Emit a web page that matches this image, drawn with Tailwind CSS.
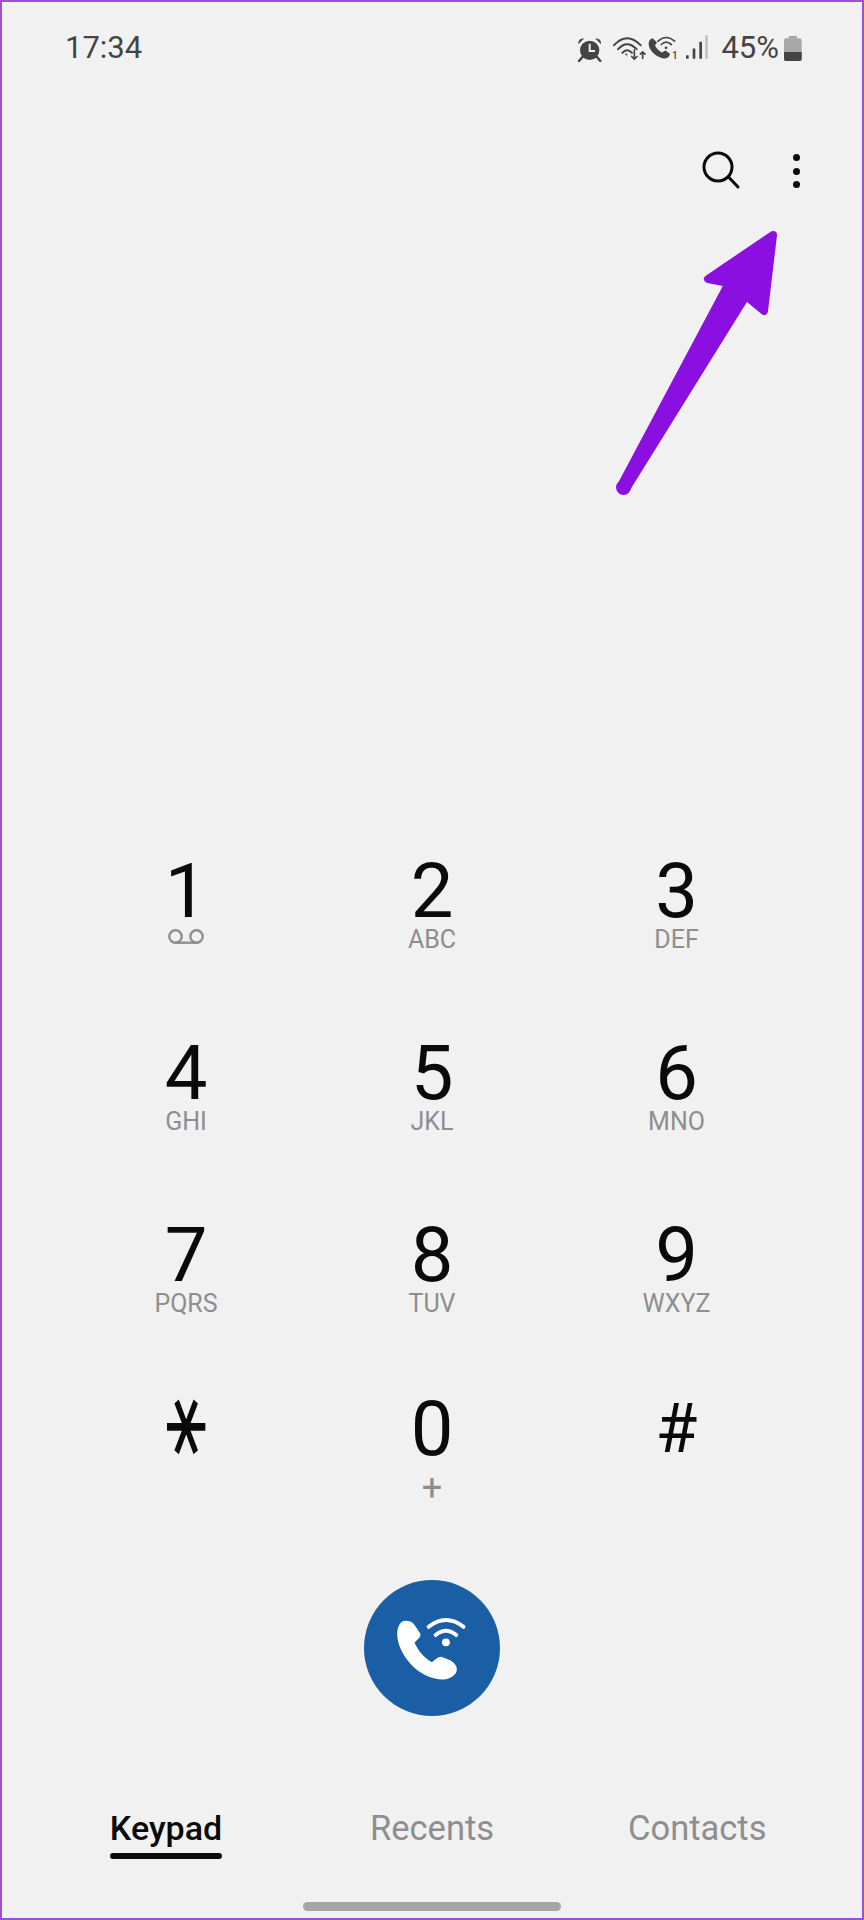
<!DOCTYPE html>
<html lang="en">
<head>
    <meta charset="UTF-8">
    <meta name="viewport" content="width=device-width, initial-scale=1.0">
    <title>Phone Keypad</title>
    <script src="https://cdn.jsdelivr.net/npm/@tailwindcss/browser@4"></script>
</head>
<body class="bg-[#f1f1f1]">
    <div class="relative w-[864px] h-[1920px] border-2 border-[#9b50dc] bg-[#f1f1f1] flex flex-col overflow-hidden [font-family:Roboto,sans-serif]">

        <!-- Status bar -->
        <div class="h-[93px] flex items-center justify-between pl-[63px] pr-[60px] text-[#444444] text-[31px]">
            <span>17:34</span>
            <div class="flex items-center">
                <!-- alarm -->
                <svg class="w-[26px] h-[26px]" viewBox="50 45 78 78" fill="#444444">
                    <circle cx="88" cy="88" r="29"/>
                    <path d="M54 70 Q52 52 72 52 Z M122 70 Q124 52 104 52 Z"/>
                    <path d="M66 108 L56 120 M110 108 L120 120" stroke="#444444" stroke-width="7" stroke-linecap="round"/>
                    <path d="M88 68 V90 H104" fill="none" stroke="#f1f1f1" stroke-width="6"/>
                </svg>
                <!-- wifi with arrows -->
                <svg class="w-[35px] h-[27px] ml-[9px]" viewBox="155 48 105 80" fill="none" stroke="#444444" stroke-width="6" stroke-linecap="round">
                    <path d="M161 78 Q200 36 241 78"/>
                    <path d="M173 90 Q200 60 229 90"/>
                    <path d="M186 101 Q200 85 215 101"/>
                    <circle cx="198" cy="106" r="3" fill="#444444" stroke="none"/>
                    <path d="M222 92 V120 M214 112 L222 120 L230 112" stroke-width="5"/>
                    <path d="M247 118 V98 M240 105 L247 98 L254 105" stroke-width="5"/>
                </svg>
                <!-- call over wifi, sim 1 -->
                <svg class="w-[31px] h-[27px] ml-[1px]" viewBox="266 48 93 80">
                    <path d="M281 58 C272 58 268 66 268 76 C270 98 298 118 316 118 C326 118 332 110 332 104 L318 94 L308 100 C298 95 290 86 287 78 L293 70 Z" fill="#444444"/>
                    <g fill="none" stroke="#444444" stroke-width="5" stroke-linecap="round">
                        <path d="M296 66 Q320 44 346 66"/>
                        <path d="M306 76 Q320 62 336 76"/>
                    </g>
                    <circle cx="320" cy="86" r="4" fill="#444444"/>
                    <text x="338" y="120" font-size="30" font-weight="500" fill="#444444">1</text>
                </svg>
                <!-- signal -->
                <svg class="w-[25px] h-[27px] ml-[5px]" viewBox="372 48 75 80" fill="#444444">
                    <rect x="378" y="108" width="8" height="11" rx="2"/>
                    <rect x="398" y="88" width="8" height="31" rx="1"/>
                    <rect x="418" y="68" width="8" height="51" rx="1"/>
                    <rect x="436" y="48" width="7" height="71" rx="1" fill="#bdbdbd"/>
                </svg>
                <span class="ml-[12px]">45%</span>
                <!-- battery -->
                <svg class="w-[18px] h-[25px] ml-[5px]" viewBox="667 47 54 75">
                    <path d="M681 47 H706 V55 H681 Z" fill="#a8a8a8"/>
                    <rect x="667" y="54" width="53" height="68" rx="6" fill="#a8a8a8"/>
                    <path d="M667 95 H720 V116 Q720 122 714 122 H673 Q667 122 667 116 Z" fill="#444444"/>
                </svg>
            </div>
        </div>

        <!-- Toolbar -->
        <div class="h-[60px] mt-[46px] flex items-center justify-end pr-[62px] gap-[52px]">
            <svg class="w-[40px] h-[40px] -mt-[2px]" viewBox="0 0 40 40" fill="none" stroke="#0a0a0a" stroke-width="3" stroke-linecap="round">
                <circle cx="17" cy="17" r="14"/>
                <path d="M27.5 27 L37 37"/>
            </svg>
            <div class="w-[7px] flex flex-col gap-[6.3px]">
                <div class="w-[7px] h-[7px] rounded-full bg-[#0a0a0a]"></div>
                <div class="w-[7px] h-[7px] rounded-full bg-[#0a0a0a]"></div>
                <div class="w-[7px] h-[7px] rounded-full bg-[#0a0a0a]"></div>
            </div>
        </div>

        <!-- Keypad -->
        <div class="mt-[659px] pl-[61px] grid grid-cols-[246px_246px_243px] grid-rows-[182px_182px_174px_182px] text-[#0a0a0a]">
            <div class="flex flex-col items-center">
                <span class="text-[76px] leading-[62px]">1</span>
                <svg class="w-[38px] h-[15px] mt-[7px]" viewBox="0 0 38 15" fill="none" stroke="#8e8e8e" stroke-width="2.4">
                    <circle cx="8.5" cy="7.5" r="6.2"/>
                    <circle cx="29.5" cy="7.5" r="6.2"/>
                    <path d="M8.5 13.7 H29.5"/>
                </svg>
            </div>
            <div class="flex flex-col items-center">
                <span class="text-[76px] leading-[62px]">2</span>
                <span class="text-[25px] leading-[30px] mt-[3px] text-[#8e8e8e]">ABC</span>
            </div>
            <div class="flex flex-col items-center">
                <span class="text-[76px] leading-[62px]">3</span>
                <span class="text-[25px] leading-[30px] mt-[3px] text-[#8e8e8e]">DEF</span>
            </div>
            <div class="flex flex-col items-center">
                <span class="text-[76px] leading-[62px]">4</span>
                <span class="text-[25px] leading-[30px] mt-[3px] text-[#8e8e8e]">GHI</span>
            </div>
            <div class="flex flex-col items-center">
                <span class="text-[76px] leading-[62px]">5</span>
                <span class="text-[25px] leading-[30px] mt-[3px] text-[#8e8e8e]">JKL</span>
            </div>
            <div class="flex flex-col items-center">
                <span class="text-[76px] leading-[62px]">6</span>
                <span class="text-[25px] leading-[30px] mt-[3px] text-[#8e8e8e]">MNO</span>
            </div>
            <div class="flex flex-col items-center">
                <span class="text-[76px] leading-[62px]">7</span>
                <span class="text-[25px] leading-[30px] mt-[3px] text-[#8e8e8e]">PQRS</span>
            </div>
            <div class="flex flex-col items-center">
                <span class="text-[76px] leading-[62px]">8</span>
                <span class="text-[25px] leading-[30px] mt-[3px] text-[#8e8e8e]">TUV</span>
            </div>
            <div class="flex flex-col items-center">
                <span class="text-[76px] leading-[62px]">9</span>
                <span class="text-[25px] leading-[30px] mt-[3px] text-[#8e8e8e]">WXYZ</span>
            </div>
            <div class="flex flex-col items-center">
                <span class="text-[72px] leading-[62px] -mt-[2px] [transform:translateX(2px)_scale(0.85,1.3)_rotate(90deg)] [font-family:'DejaVu_Sans',sans-serif]">∗</span>
            </div>
            <div class="flex flex-col items-center">
                <span class="text-[76px] leading-[62px]">0</span>
                <span class="text-[36px] leading-[30px] mt-[13px] text-[#8e8e8e]">+</span>
            </div>
            <div class="flex flex-col items-center">
                <span class="text-[68px] leading-[62px]">#</span>
            </div>
        </div>

        <!-- Call button -->
        <div class="flex justify-center">
            <button class="w-[136px] h-[136px] rounded-full bg-[#1a5fa6] flex items-center justify-center">
                <svg class="w-[136px] h-[136px]" viewBox="70 60 410 410">
                    <path d="M195 183 C180 183 170 200 170 225 C172 280 230 360 310 360 C330 360 350 345 350 330 C350 318 342 310 330 302 L305 292 C295 290 285 300 275 308 C250 295 232 272 222 248 C232 240 242 232 240 222 L222 195 C215 186 205 183 195 183 Z" fill="#ffffff"/>
                    <g fill="none" stroke="#ffffff" stroke-width="12" stroke-linecap="round">
                        <path d="M265 201 Q317 160 370 201"/>
                        <path d="M286 226 Q317 200 348 226"/>
                    </g>
                    <circle cx="317" cy="248" r="12" fill="#ffffff"/>
                </svg>
            </button>
        </div>

        <!-- Tabs -->
        <div class="mt-[92px] flex items-start pl-[108px] text-[34.5px] leading-[40px] text-[#8e8e8e]">
            <div class="w-[112px] flex flex-col items-center text-[#0a0a0a] text-[34px] font-medium">
                <span>Keypad</span>
                <div class="w-[112px] h-[6px] mt-[5px] rounded-full bg-[#0a0a0a]"></div>
            </div>
            <span class="ml-[148px]">Recents</span>
            <span class="ml-[134px]">Contacts</span>
        </div>

        <!-- Home indicator -->
        <div class="absolute left-[301px] bottom-[7px] w-[258px] h-[9px] rounded-full bg-[#a5a5a5]"></div>

        <!-- Annotation arrow -->
        <svg class="absolute left-[598px] top-[218px] w-[200px] h-[290px]" viewBox="600 220 200 290" fill="#8a0fe0" stroke="#8a0fe0" stroke-width="8" stroke-linejoin="round">
            <polygon points="773,235 708,279 729,283 621,486 626,489 746,296 764,311"/>
            <circle cx="623.5" cy="487.5" r="3.5"/>
        </svg>
    </div>
</body>
</html>
